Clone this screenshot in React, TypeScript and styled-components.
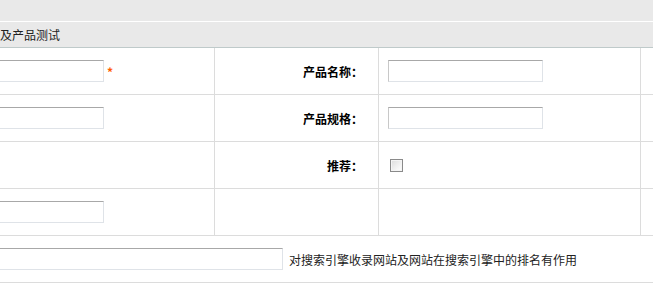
import React from "react";
import styled, { createGlobalStyle } from "styled-components";

const Global = createGlobalStyle`
  html, body { margin: 0; padding: 0; background: #fff; overflow: hidden; }
  body { font-family: "Noto Sans CJK SC", "Liberation Sans", sans-serif; font-size: 12px; color: #000; }
`;

const Page = styled.div`
  width: 653px;
  height: 286px;
  overflow: hidden;
`;

const TopBar = styled.div`
  height: 21px;
  background: #e9e9e9;
  border-bottom: 1px solid #fff;
`;

const TitleBar = styled.div`
  height: 25px;
  background: #e9e9e9;
  border-bottom: 1px solid #bfcaca;
  display: flex;
  align-items: center;
  font-size: 12px;
  color: #222;
  white-space: nowrap;
`;

const Grid = styled.div`
  display: grid;
  grid-template-columns: 215px 164px 262px 40px;
  grid-auto-rows: 47px;
`;

const Cell = styled.div<{ $align?: "right" | "left" }>`
  border-right: 1px solid #dcdcdc;
  border-bottom: 1px solid #dcdcdc;
  display: flex;
  align-items: center;
  justify-content: ${(p) => (p.$align === "right" ? "flex-end" : "flex-start")};
  padding: ${(p) => (p.$align === "right" ? "0 15px 0 0" : "0 0 0 9px")};
  box-sizing: border-box;
  overflow: visible;
`;

const LeftCell = styled(Cell)`
  padding: 0;
`;

const Label = styled.span`
  font-weight: bold;
  font-size: 12px;
  color: #000;
  white-space: nowrap;
`;

const TextInput = styled.input<{ $w: number; $ml?: number }>`
  box-sizing: border-box;
  width: ${(p) => p.$w}px;
  height: 22px;
  margin: 0 0 0 ${(p) => p.$ml ?? 0}px;
  padding: 0 3px;
  border: 1px solid #dfe3e8;
  border-top-color: #a8a8a8;
  border-left-color: #c8c8c8;
  background: #fff;
  outline: none;
  font-size: 12px;
`;

const Required = styled.span`
  color: #ff5a00;
  font-size: 12px;
  font-weight: bold;
  margin-left: 3px;
  line-height: 1;
  padding-top: 2px;
`;

const Check = styled.span`
  display: inline-block;
  box-sizing: border-box;
  width: 13px;
  height: 13px;
  margin-left: 2px;
  border: 1px solid #8a8a8a;
  background: linear-gradient(135deg, #dcdcdc 0%, #f6f6f6 70%, #ffffff 100%);
  box-shadow: inset 0 0 0 1px #f4f4f4;
`;

const SeoRow = styled.div`
  height: 47px;
  box-sizing: border-box;
  border-bottom: 1px solid #dcdcdc;
  display: flex;
  align-items: center;
  gap: 6px;
  white-space: nowrap;
`;

const Hint = styled.span`
  font-size: 12px;
  color: #222;
`;

export default function App() {
  return (
    <Page>
      <Global />
      <TopBar />
      <TitleBar>及产品测试</TitleBar>
      <Grid>
        <LeftCell>
          <TextInput $w={155} $ml={-51} />
          <Required>*</Required>
        </LeftCell>
        <Cell $align="right"><Label>产品名称：</Label></Cell>
        <Cell><TextInput $w={155} /></Cell>
        <Cell />

        <LeftCell>
          <TextInput $w={155} $ml={-51} />
        </LeftCell>
        <Cell $align="right"><Label>产品规格：</Label></Cell>
        <Cell><TextInput $w={155} /></Cell>
        <Cell />

        <LeftCell />
        <Cell $align="right"><Label>推荐：</Label></Cell>
        <Cell><Check /></Cell>
        <Cell />

        <LeftCell>
          <TextInput $w={155} $ml={-51} />
        </LeftCell>
        <Cell />
        <Cell />
        <Cell />
      </Grid>
      <SeoRow>
        <TextInput $w={300} $ml={-17} />
        <Hint>对搜索引擎收录网站及网站在搜索引擎中的排名有作用</Hint>
      </SeoRow>
    </Page>
  );
}
